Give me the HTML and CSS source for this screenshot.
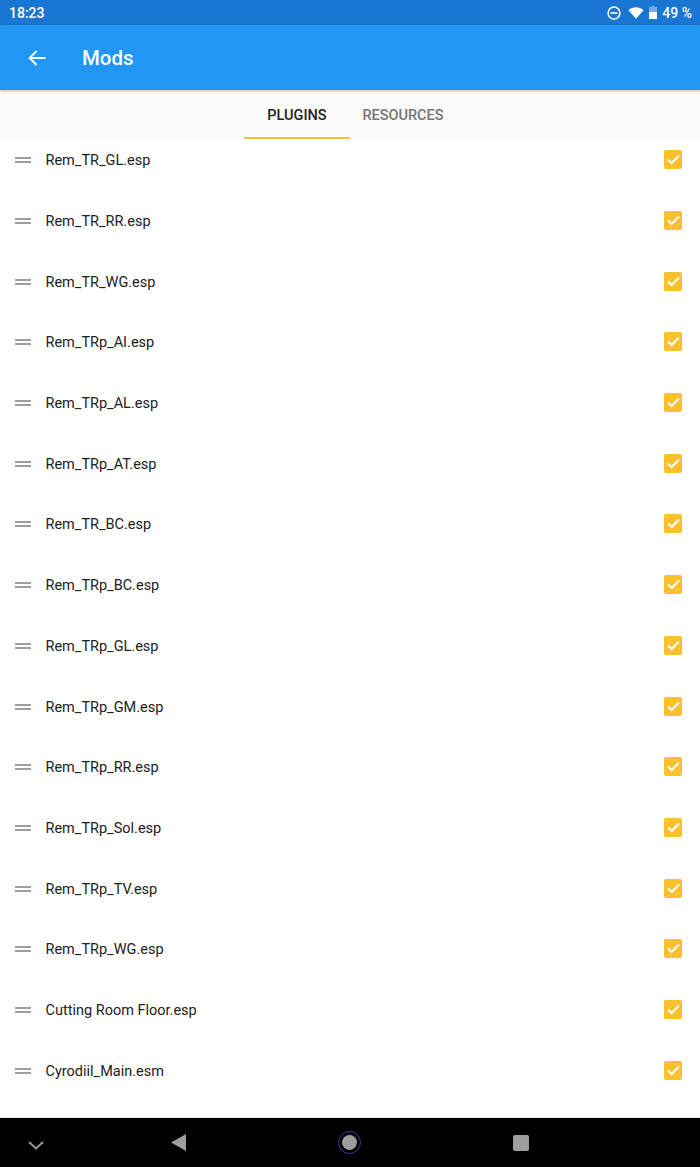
FILE: index.html
```html
<!DOCTYPE html>
<html lang="en">
<head>
    <meta charset="UTF-8">
    <meta name="viewport" content="width=device-width, initial-scale=1.0">
    <title>Mods</title>
    <link rel="stylesheet" href="styles.css">
</head>
<body>
    <div class="status-bar">
        <span class="clock">18:23</span>
        <div class="status-icons">
            <svg class="icon-dnd" width="14" height="14" viewBox="0 0 14 14"><circle cx="7" cy="7" r="5.9" fill="none" stroke="#fff" stroke-width="1.5"/><rect x="3.6" y="6.2" width="6.8" height="1.6" fill="#fff"/></svg>
            <svg class="icon-wifi" width="16" height="12" viewBox="0 0 16 12"><path d="M0.5 3.2C4.8 -0.6 11.2 -0.6 15.5 3.2L8 11.8Z" fill="#fff"/></svg>
            <svg class="icon-battery" width="8" height="13" viewBox="0 0 8 13"><path d="M2.5 0H5.5V1H8V13H0V1H2.5Z" fill="#fff" fill-opacity="0.4"/><rect y="6" width="8" height="7" fill="#fff"/></svg>
            <span class="battery-text">49 %</span>
        </div>
    </div>

    <header class="app-bar">
        <svg class="back-icon" width="18" height="16" viewBox="0 0 18 16"><path d="M17.5 8H2M8.6 1L1.6 8L8.6 15" fill="none" stroke="#fff" stroke-width="1.8"/></svg>
        <h1 class="app-title">Mods</h1>
    </header>

    <nav class="tabs">
        <div class="tab tab-active">PLUGINS</div>
        <div class="tab">RESOURCES</div>
    </nav>

    <main class="plugin-list" id="pluginList"></main>

    <footer class="nav-bar">
        <svg class="nav-chevron" width="16" height="9" viewBox="0 0 16 9"><path d="M1 1L8 7.5L15 1" fill="none" stroke="#9e9e9e" stroke-width="1.8"/></svg>
        <svg class="nav-back" width="15" height="17" viewBox="0 0 15 17"><path d="M15 0V17L0 8.5Z" fill="#9e9e9e"/></svg>
        <div class="nav-home"><div class="nav-home-dot"></div></div>
        <div class="nav-recent"></div>
    </footer>

    <script src="script.js"></script>
</body>
</html>
```

FILE: styles.css
```css
* {
    margin: 0;
    padding: 0;
    box-sizing: border-box;
    font-family: Roboto, "Liberation Sans", sans-serif;
}

body {
    width: 700px;
    height: 1167px;
    display: flex;
    flex-direction: column;
    background-color: #ffffff;
    overflow: hidden;
}

.status-bar {
    height: 25px;
    padding: 0 8px 0 9px;
    display: flex;
    align-items: center;
    justify-content: space-between;
    background-color: #1976d2;
    color: #ffffff;
}

.clock {
    font-size: 14px;
    font-weight: 500;
}

.status-icons {
    display: flex;
    align-items: center;
}

.icon-dnd {
    margin-right: 7px;
}

.icon-wifi {
    margin-right: 5px;
}

.icon-battery {
    margin-right: 5px;
}

.battery-text {
    font-size: 14px;
    font-weight: 500;
}

.app-bar {
    height: 65px;
    padding-left: 28px;
    display: flex;
    align-items: center;
    background-color: #2196f3;
    position: relative;
    box-shadow: 0 1px 3px rgba(0, 0, 0, 0.25);
}

.app-title {
    margin-left: 36px;
    color: #ffffff;
    font-size: 20.4px;
    font-weight: 500;
}

.tabs {
    height: 49px;
    padding-top: 4px;
    display: flex;
    justify-content: center;
    background-color: #fafafa;
}

.tab {
    width: 106px;
    display: flex;
    align-items: center;
    justify-content: center;
    color: #757575;
    font-size: 14.5px;
    font-weight: 500;
    border-bottom: 2px solid transparent;
}

.tab-active {
    color: #212121;
    border-bottom-color: #fbc02d;
}

/* list is scrolled a little, first row runs under the tabs */
.plugin-list {
    flex: 1;
    margin-top: -9px;
    overflow: hidden;
}

.plugin-row {
    height: 60.7px;
    padding: 0 18px 0 15px;
    display: flex;
    align-items: center;
}

.drag-handle {
    width: 16px;
    height: 6px;
    border-top: 2px solid #9e9e9e;
    border-bottom: 2px solid #9e9e9e;
    flex-shrink: 0;
}

.plugin-name {
    flex: 1;
    margin-left: 14.5px;
    padding-top: 1px;
    color: #212121;
    font-size: 14.5px;
}

.checkbox {
    width: 18px;
    height: 19px;
    margin-bottom: 1px;
    border-radius: 2px;
    background-color: #fbc02d;
    display: flex;
    align-items: center;
    justify-content: center;
}

.nav-bar {
    height: 50px;
    display: block;
    position: relative;
    background-color: #000000;
    border-top: 1px solid #e8e8e8;
}

/* soft keys sit at fixed spots on the bar */
.nav-chevron {
    position: absolute;
    left: 28px;
    top: 23px;
}

.nav-back {
    position: absolute;
    left: 171px;
    top: 16px;
}

.nav-home {
    position: absolute;
    left: 338px;
    top: 13px;
    width: 23px;
    height: 23px;
    border: 1px solid #3f3a9e;
    border-radius: 50%;
    display: flex;
    align-items: center;
    justify-content: center;
}

.nav-home-dot {
    width: 15px;
    height: 15px;
    border-radius: 50%;
    background-color: #9e9e9e;
}

.nav-recent {
    position: absolute;
    left: 513px;
    top: 17px;
    width: 16px;
    height: 16px;
    border-radius: 2px;
    background-color: #9e9e9e;
}
```

FILE: script.js
```js
// Fill the plugin list
const plugins = [
    'Rem_TR_GL.esp', 'Rem_TR_RR.esp', 'Rem_TR_WG.esp', 'Rem_TRp_AI.esp',
    'Rem_TRp_AL.esp', 'Rem_TRp_AT.esp', 'Rem_TR_BC.esp', 'Rem_TRp_BC.esp',
    'Rem_TRp_GL.esp', 'Rem_TRp_GM.esp', 'Rem_TRp_RR.esp', 'Rem_TRp_Sol.esp',
    'Rem_TRp_TV.esp', 'Rem_TRp_WG.esp', 'Cutting Room Floor.esp', 'Cyrodiil_Main.esm'
];

const list = document.getElementById('pluginList');
const check = '<svg width="13" height="11" viewBox="0 0 13 11"><path d="M1 5.5L4.7 9L12 1.5" fill="none" stroke="#fff" stroke-width="2"/></svg>';

plugins.forEach(name => {
    const row = document.createElement('div');
    row.className = 'plugin-row';
    row.innerHTML = `<div class="drag-handle"></div><div class="plugin-name">${name}</div><div class="checkbox">${check}</div>`;
    list.appendChild(row);
});
```
